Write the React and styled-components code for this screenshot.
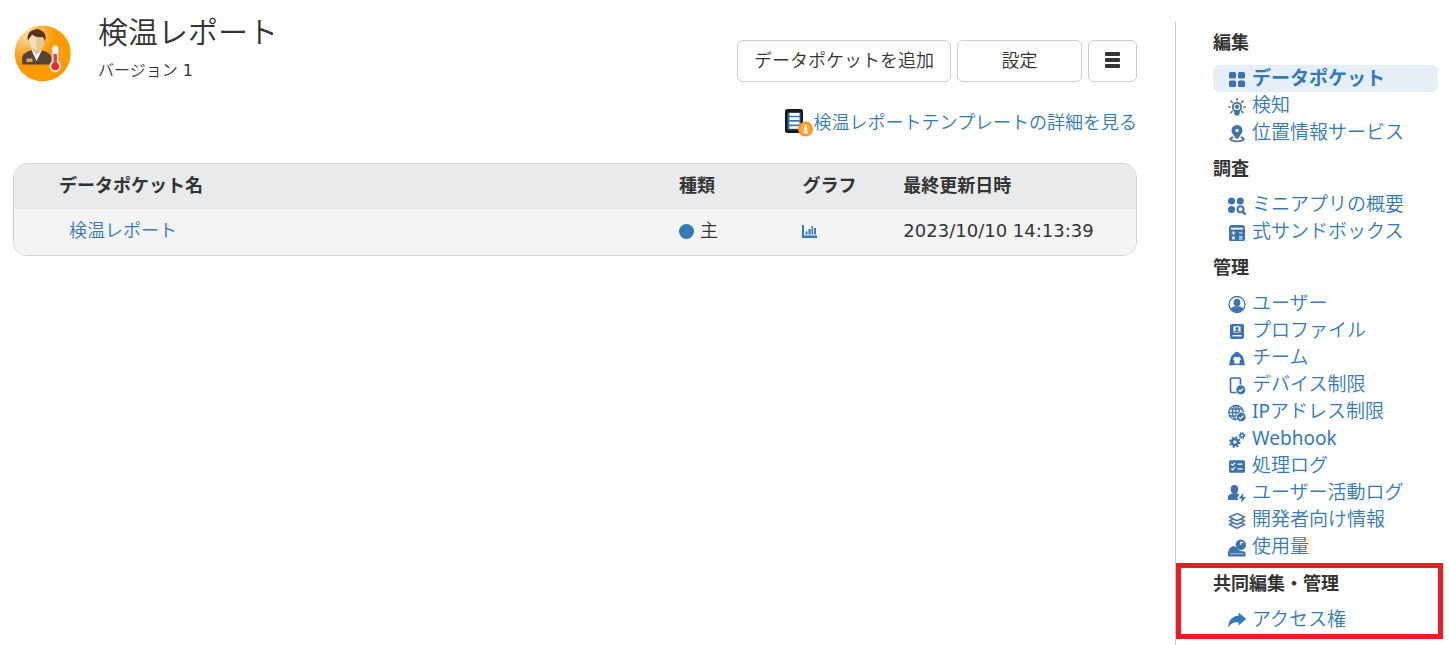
import React from 'react';
import styled, { createGlobalStyle } from 'styled-components';

const GlobalStyle = createGlobalStyle`
  * {
    box-sizing: border-box;
  }

  body {
    margin: 0;
    background: #fff;
    color: #333;
    font-family: "DejaVu Sans", "Noto Sans CJK JP", sans-serif;
    font-size: 18px;
    font-weight: 350;
    line-height: 27px;
  }
`;

const Page = styled.div`
  display: flex;
  min-height: 100vh;
`;

const Main = styled.main`
  flex: 1;
  min-width: 0;
  padding: 14px 38px 24px 13px;
`;

const Header = styled.header`
  display: flex;
  align-items: flex-start;
`;

const Avatar = styled.svg`
  width: 60px;
  height: 60px;
  margin-top: 10px;
  margin-right: 25px;
  flex-shrink: 0;
`;

const Titles = styled.div`
  flex: 1;
`;

const Title = styled.h1`
  margin: 0;
  font-size: 30px;
  font-weight: 350;
  line-height: 38px;
`;

const Version = styled.p`
  margin: 5px 0 0;
  font-size: 16px;
  line-height: 28px;
`;

// plain Latin text and digits look too thin at the weight of the kana
const Latin = styled.span`
  font-weight: 400;
`;

const Toolbar = styled.div`
  display: flex;
  gap: 6px;
  margin-top: 26px;
`;

const Button = styled.button`
  display: flex;
  align-items: center;
  justify-content: center;
  height: 42px;
  min-width: ${({ $wide }) => ($wide ? '125px' : '49px')};
  padding: 0 16px 2px;
  border: 1px solid #ccc;
  border-radius: 6px;
  background: #fff;
  color: #333;
  font: inherit;
  cursor: pointer;
`;

const TemplateRow = styled.div`
  display: flex;
  justify-content: flex-end;
  margin-top: 22px;
`;

const TemplateLink = styled.a`
  display: flex;
  align-items: center;
  color: #337ab7;
  text-decoration: none;

  svg {
    width: 30px;
    height: 30px;
  }
`;

const PocketTable = styled.table`
  width: 100%;
  margin-top: 26px;
  border: 1px solid #d3d4d5;
  border-radius: 14px;
  border-spacing: 0;
  overflow: hidden;
  table-layout: fixed;
  text-align: left;
`;

const HeadCell = styled.th`
  width: ${({ $width }) => $width};
  height: 45px;
  padding: 0 2px 2px ${({ $first }) => ($first ? '45px' : '3px')};
  background: #e8eaec;
  font-weight: 700;
`;

const Cell = styled.td`
  height: 46px;
  padding: 0 2px 4px ${({ $first }) => ($first ? '55px' : '3px')};
  background: #f4f4f4;

  a {
    color: #337ab7;
    text-decoration: none;
  }

  svg {
    display: block;
    width: 16px;
    height: 16px;
    margin-top: 4px;
  }
`;

const Kind = styled.span`
  display: flex;
  align-items: center;
  gap: 6px;

  &::before {
    content: '';
    width: 15px;
    height: 15px;
    margin-top: 3px;
    border-radius: 50%;
    background: #337ab7;
  }
`;

const Sidebar = styled.nav`
  width: 274px;
  flex-shrink: 0;
  margin-top: 22px;
  padding-top: 7px;
  border-left: 1px solid #ccc;
  font-family: "Noto Sans", "Noto Sans CJK JP", sans-serif;
`;

const Section = styled.section`
  padding: 0 11px 9px 37px;
`;

const MarkedSection = styled.section`
  margin: -6px 6px 0 0;
  padding: 2px 0 1px 32px;
  border: 5px solid #ed1c24;
`;

const SectionTitle = styled.h2`
  margin: 0 0 9px;
  font-size: 18px;
  font-weight: 700;
  line-height: 27px;
`;

const Menu = styled.ul`
  margin: 0;
  padding: 0;
  list-style: none;
`;

const MenuLink = styled.a`
  display: flex;
  align-items: center;
  gap: 6px;
  height: 27px;
  padding-left: 15px;
  border-radius: 6px;
  background: ${({ $active }) => ($active ? '#e6eff7' : 'transparent')};
  color: #337ab7;
  font-size: 19px;
  font-weight: ${({ $active }) => ($active ? 700 : 350)};
  text-decoration: none;
  white-space: nowrap;

  svg {
    width: 18px;
    height: 18px;
    margin-top: 2px;
    flex-shrink: 0;
  }
`;

const BLUE = '#3c72ae';

const Glyph = ({ children }) => (
  <svg viewBox="0 0 18 18" fill={BLUE} aria-hidden="true">{children}</svg>
);

const icons = {
  pocket: (
    <Glyph>
      <rect x="1" y="1" width="7" height="6.500" rx="1.500" />
      <rect x="10" y="1" width="7" height="6.500" rx="1.500" />
      <rect x="1" y="9.500" width="7" height="6.500" rx="1.500" />
      <rect x="10" y="9.500" width="7" height="6.500" rx="1.500" />
    </Glyph>
  ),
  detect: (
    <Glyph>
      <g stroke="#60788f" strokeWidth="1.700" strokeLinecap="round">
        <path d="M9 .8v1.200M3 3.200l1.200 1.200M15 3.200l-1.200 1.200M.8 9h1.200M16 9h1.200M3 14.600l1.200-1.200M15 14.600l-1.200-1.200" />
      </g>
      <circle cx="9" cy="9" r="4.200" fill="#fff" stroke="#60788f" strokeWidth="2" />
      <path d="M9 6l2.500 2.700L9 11.500 6.500 8.700z" />
      <path d="M6.300 12h5.400v4L10 17.800H8L6.300 16z" />
    </Glyph>
  ),
  location: (
    <Glyph>
      <path d="M4.500 11.300C2.500 12 1.300 13 1.300 14c0 1.900 3.500 3.300 7.700 3.300s7.700-1.400 7.700-3.300c0-1-1.200-2-3.200-2.700l-1.300 1.600c1.300.3 2 .7 2 1.100 0 .7-2.300 1.400-5.200 1.400S3.800 14.700 3.800 14c0-.4.700-.8 2-1.100z" fill="#60788f" />
      <path fillRule="evenodd" d="M9 0a5.500 5.500 0 0 0-5.500 5.500C3.500 9 9 14.300 9 14.300S14.500 9 14.500 5.500A5.500 5.500 0 0 0 9 0zm0 3.800a1.700 1.700 0 1 1 0 3.400 1.700 1.700 0 0 1 0-3.400z" />
    </Glyph>
  ),
  overview: (
    <Glyph>
      <circle cx="3.500" cy="4" r="3.500" />
      <circle cx="12.300" cy="4" r="3.500" />
      <circle cx="3.500" cy="12.500" r="3.500" />
      <circle cx="12.500" cy="12.300" r="3" fill="none" stroke={BLUE} strokeWidth="2" />
      <path d="M14.600 14.600l2.400 2.400" stroke={BLUE} strokeWidth="2.400" strokeLinecap="round" />
    </Glyph>
  ),
  formula: (
    <Glyph>
      <path fillRule="evenodd" d="M4 1h10a3 3 0 0 1 3 3v11.500a1.500 1.500 0 0 1-1.500 1.500h-13A1.500 1.500 0 0 1 1 15.500V4a3 3 0 0 1 3-3zm-1 2.700v1.800h12V3.700z" />
      <path d="M3.700 9h3.600M5.500 7.200v3.600M11 9h3.500M4.200 12.700l2.600 2.600M6.800 12.700l-2.600 2.600M11 12.800h3.500M11 15h3.500" stroke="#fff" strokeWidth="1.200" />
    </Glyph>
  ),
  user: (
    <Glyph>
      <circle cx="9" cy="8.500" r="8" fill="#fff" stroke={BLUE} strokeWidth="1.300" />
      <ellipse cx="9" cy="6.500" rx="3.400" ry="3.800" />
      <path d="M2.800 13c.8-1.800 3-2.300 4.200-2.700h4c1.200.4 3.400.9 4.200 2.700a7.600 7.600 0 0 1-12.400 0z" />
    </Glyph>
  ),
  profile: (
    <Glyph>
      <rect x="2" y="1" width="14" height="15" rx="2" />
      <rect x="5.500" y="3.200" width="7" height="6.800" rx="1" fill="#fff" />
      <circle cx="9" cy="5.500" r="1.600" />
      <path d="M6 9.500c.3-3 5.700-3 6 0z" />
      <path d="M4.500 12.700h9" stroke="#fff" strokeWidth="1.400" />
    </Glyph>
  ),
  team: (
    <Glyph>
      <path d="M4 12C3 8 5 4.800 9 4.500c4 .3 6 3.500 5 7.500" fill="none" stroke={BLUE} strokeWidth="2.800" />
      <path d="M5 14.300h8" stroke={BLUE} strokeWidth="1.400" />
      <circle cx="9" cy="4.500" r="2.700" />
      <circle cx="4" cy="12" r="2.500" />
      <circle cx="14" cy="12" r="2.500" />
      <path d="M1 15.300c0-4 6-4 6 0zM11 15.300c0-4 6-4 6 0z" />
    </Glyph>
  ),
  device: (
    <Glyph>
      <rect x="2.500" y="1" width="10" height="14.500" rx="1.500" fill="#fff" stroke={BLUE} strokeWidth="1.700" />
      <circle cx="12.800" cy="12.800" r="4.900" stroke="#fff" strokeWidth=".8" />
      <path d="M10.600 12.900l1.600 1.600 2.900-3" fill="none" stroke="#fff" strokeWidth="1.200" />
    </Glyph>
  ),
  ip: (
    <Glyph>
      <g fill="none" stroke={BLUE} strokeWidth="1.300">
        <circle cx="8" cy="8.500" r="7.200" />
        <ellipse cx="8" cy="8.500" rx="3.400" ry="7.200" />
        <path d="M8 1.300v14.400M1 8.500h14M2 5h12M2 12h12" />
      </g>
      <circle cx="13.200" cy="13" r="4.800" stroke="#fff" strokeWidth=".8" />
      <path d="M11 13.100l1.600 1.600 2.900-3" fill="none" stroke="#fff" strokeWidth="1.200" />
    </Glyph>
  ),
  webhook: (
    <Glyph>
      <circle cx="6.800" cy="11" r="3" fill="none" stroke={BLUE} strokeWidth="2.600" />
      <circle cx="6.800" cy="11" r="4.900" fill="none" stroke={BLUE} strokeWidth="1.700" strokeDasharray="2 1.848" />
      <circle cx="14" cy="4.500" r="1.800" fill="none" stroke={BLUE} strokeWidth="1.400" />
      <circle cx="14" cy="4.500" r="2.900" fill="none" stroke={BLUE} strokeWidth="1.200" strokeDasharray="1.250 1.027" />
    </Glyph>
  ),
  processLog: (
    <Glyph>
      <rect x="1" y="2.200" width="16" height="12.500" rx="1.500" />
      <path d="M3.300 6l1.300 1.300L7.200 4.500M3.300 10.700l1.300 1.300 2.600-2.800M9.500 6.100h5M9.500 10.800h5" fill="none" stroke="#fff" strokeWidth="1.200" />
    </Glyph>
  ),
  activityLog: (
    <Glyph>
      <ellipse cx="6.500" cy="4.300" rx="3.800" ry="4.200" />
      <path d="M0 15v-2.500C0 10.200 2.500 8.300 6.500 8.300c2 0 3.500.3 4.600 1L9.300 13l1.200 2z" />
      <path d="M15.500 7.700l-4.700 5.800h3l-.8 4.400 4.900-5.900h-3z" />
    </Glyph>
  ),
  developer: (
    <Glyph>
      <g fill="#fff" stroke="#4e7cac" strokeWidth="1.700" strokeLinejoin="round">
        <path d="M1.500 12.500L9 9l7.500 3.500L9 16.200z" />
        <path d="M1.500 8.800L9 5.500l7.500 3.300L9 12.500z" />
        <path d="M1.500 5L9 1.500 16.500 5 9 8.700z" />
      </g>
    </Glyph>
  ),
  usage: (
    <Glyph>
      <path d="M0 14C1 9.500 2.800 7.200 6 7.200c1.700 0 2.500 1.300 3.600 2.700 1.300 1.500 3 2.200 5.400 2.300 1.500.1 2.500.8 2.500 2v3.300H0z" />
      <circle cx="12.800" cy="5.800" r="5.200" />
      <path d="M12.800 5.800V3.400h2.500" stroke="#fff" strokeWidth="1.200" fill="none" />
      <path d="M2 14.800h13.500" stroke="#fff" strokeWidth=".6" />
    </Glyph>
  ),
  share: (
    <Glyph>
      <path d="M10.500 .500L18.200 7 10.500 13.500v-3.200C6 10 3 11 .2 15.800.2 9 3.800 4 10.500 3.700z" fill="#337ab7" />
    </Glyph>
  ),
};

const editItems = [
  { icon: 'pocket', label: 'データポケット', active: true },
  { icon: 'detect', label: '検知' },
  { icon: 'location', label: '位置情報サービス' },
];

const researchItems = [
  { icon: 'overview', label: 'ミニアプリの概要' },
  { icon: 'formula', label: '式サンドボックス' },
];

const adminItems = [
  { icon: 'user', label: 'ユーザー' },
  { icon: 'profile', label: 'プロファイル' },
  { icon: 'team', label: 'チーム' },
  { icon: 'device', label: 'デバイス制限' },
  { icon: 'ip', latin: 'IP', label: 'アドレス制限' },
  { icon: 'webhook', latin: 'Webhook', label: '' },
  { icon: 'processLog', label: '処理ログ' },
  { icon: 'activityLog', label: 'ユーザー活動ログ' },
  { icon: 'developer', label: '開発者向け情報' },
  { icon: 'usage', label: '使用量' },
];

const shareItems = [{ icon: 'share', label: 'アクセス権' }];

const MenuGroup = ({ as: Wrapper = Section, title, items }) => (
  <Wrapper>
    <SectionTitle>{title}</SectionTitle>
    <Menu>
      {items.map(({ icon, latin, label, active }) => (
        <li key={icon}>
          <MenuLink href="#" $active={active} aria-current={active ? 'page' : undefined}>
            {icons[icon]}
            <span>
              {latin && <Latin>{latin}</Latin>}
              {label}
            </span>
          </MenuLink>
        </li>
      ))}
    </Menu>
  </Wrapper>
);

const AppAvatar = () => (
  <Avatar viewBox="0 0 60 60" aria-hidden="true">
    <defs>
      <radialGradient id="orange" cx="0.22" cy="0.15" r="0.5">
        <stop offset="0" stopColor="#ffdca6" />
        <stop offset="1" stopColor="#ff9900" />
      </radialGradient>
    </defs>
    <circle cx="29.700" cy="29.500" r="28" fill="url(#orange)" />
    <path d="M9 40.500v-6c0-4 3.500-6.500 10-8.500h9c7 2 10.500 4.500 10.500 8.500v6z" fill="#594338" />
    <path d="M18.500 26l5 11 5.500-11-5.500-3z" fill="#fff" />
    <path d="M20 22h7.500v5l-4 4-3.500-4z" fill="#dfc08b" />
    <ellipse cx="23.500" cy="17" rx="7.500" ry="9" fill="#f6dfb3" />
    <path d="M23.500 8c5 0 7.500 3.500 7.500 9 0 5-3 9-7.500 9z" fill="#e5c897" />
    <path d="M15 17C13.500 10 17 6.500 21 6c2-1.500 5-1 7 .500 4 1.500 5.500 5.500 4 10.500l-2-4c-5 1-9-.5-11-2.500-1 2.500-3 3.500-4 6.500z" fill="#593421" />
    <rect x="13.500" y="34.500" width="6" height="3.500" fill="#dca75a" />
    <path d="M47 26h3M47 29.500h3M47 33h3M47 36.500h3" stroke="#e0a45a" strokeWidth="1.500" />
    <path d="M39 24.500a3.200 3.200 0 0 1 6.400 0v13a5.800 5.800 0 1 1-6.400 0z" fill="#f2f2f2" stroke="#d2b488" strokeWidth=".7" />
    <path d="M42.200 30v12" stroke="#df4040" strokeWidth="3.400" />
    <circle cx="42.200" cy="42.300" r="3.900" fill="#e52b2b" />
  </Avatar>
);

const TemplateIcon = () => (
  <svg viewBox="0 0 30 30" aria-hidden="true">
    <rect x="1" y="2" width="18" height="24" rx="2.500" fill="#191919" />
    <rect x="3.700" y="5.500" width="12.800" height="17" fill="#3f76ad" />
    <path d="M5.500 7.300h10M5.500 11.700h10M5.500 16.100h10M5.500 20.500h10" stroke="#fff" strokeWidth="2.700" />
    <circle cx="21.500" cy="22" r="7.500" fill="#f7931e" />
    <circle cx="21.500" cy="22" r="5.500" fill="#ffa63d" />
    <path d="M21.700 17.500v2M20 21h2v4.500M19.800 25.500h4" stroke="#fff" strokeWidth="1.800" fill="none" />
  </svg>
);

const App = () => {
  return (
    <>
      <GlobalStyle />
      <Page>
        <Main>
          <Header>
            <AppAvatar />
            <Titles>
              <Title>検温レポート</Title>
              <Version>バージョン <Latin>1</Latin></Version>
            </Titles>
            <Toolbar>
              <Button type="button">データポケットを追加</Button>
              <Button type="button" $wide>設定</Button>
              <Button type="button" aria-label="メニュー">
                <svg width="15" height="17" viewBox="0 0 15 17" fill="#333" aria-hidden="true">
                  <rect y="0" width="15" height="4" rx="1" />
                  <rect y="6" width="15" height="4" rx="1" />
                  <rect y="12" width="15" height="4" rx="1" />
                </svg>
              </Button>
            </Toolbar>
          </Header>
          <TemplateRow>
            <TemplateLink href="#">
              <TemplateIcon />
              検温レポートテンプレートの詳細を見る
            </TemplateLink>
          </TemplateRow>
          <PocketTable>
            <thead>
              <tr>
                <HeadCell $width="59%" $first>データポケット名</HeadCell>
                <HeadCell $width="11%">種類</HeadCell>
                <HeadCell $width="9%">グラフ</HeadCell>
                <HeadCell $width="21%">最終更新日時</HeadCell>
              </tr>
            </thead>
            <tbody>
              <tr>
                <Cell $first><a href="#">検温レポート</a></Cell>
                <Cell><Kind>主</Kind></Cell>
                <Cell>
                  <a href="#" aria-label="グラフ">
                    <svg viewBox="0 0 16 16" fill="#337ab7" aria-hidden="true">
                      <path d="M0 1h2v10.500h13V14H0zM3.500 7.500h2v3h-2zM6.500 5h2.200v5.500H6.500zM9.500 2H11v8.500H9.500zM12 4h2v6.500h-2z" />
                    </svg>
                  </a>
                </Cell>
                <Cell><Latin>2023/10/10 14:13:39</Latin></Cell>
              </tr>
            </tbody>
          </PocketTable>
        </Main>
        <Sidebar>
          <MenuGroup title="編集" items={editItems} />
          <MenuGroup title="調査" items={researchItems} />
          <MenuGroup title="管理" items={adminItems} />
          <MenuGroup as={MarkedSection} title="共同編集・管理" items={shareItems} />
        </Sidebar>
      </Page>
    </>
  );
};

export default App;
